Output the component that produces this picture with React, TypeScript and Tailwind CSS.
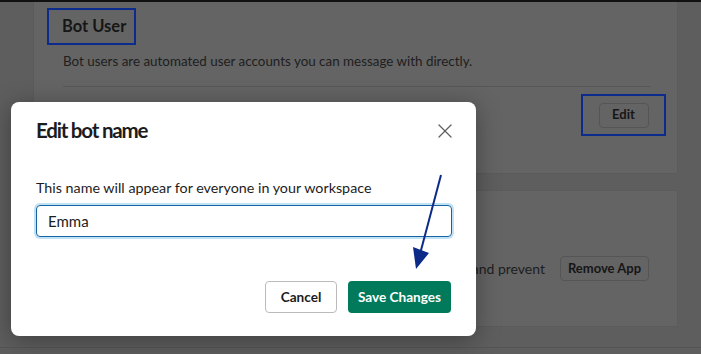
import { X } from "lucide-react";

// --- dimmed settings page behind the dialog ---

function BackgroundPage() {
  return (
    <div className="flex h-full flex-col pl-[33px] pr-[23px]">
      {/* Bot user card */}
      <section className="h-[172px] border-x border-b border-[#5b5b5b] bg-[#646464] pl-[13px] pr-[11px] pt-[6px]">
        <div className="inline-flex h-[37px] w-[89px] items-center border-2 border-[#0b2c8c] pl-[13px]">
          <h2 className="text-[16.5px] font-bold text-[#161616]">Bot User</h2>
        </div>
        <p className="mt-[6px] pl-[16px] text-[13.4px] text-[#1e1e1e]">
          Bot users are automated user accounts you can message with directly.
        </p>
        <div className="mt-[15px] ml-[16px] mr-[15px] border-t border-[#575757]" />
        <div className="mt-[7px] flex justify-end">
          <div className="flex h-[42px] w-[85px] items-center justify-center border-2 border-[#0b2c8c]">
            <button
              type="button"
              className="h-[25px] w-[50px] rounded-[4px] border border-[#555] text-[13px] font-bold text-[#161616]"
            >
              Edit
            </button>
          </div>
        </div>
      </section>

      {/* Remove app card */}
      <section className="mt-[16px] flex h-[137px] items-center border border-[#5b5b5b] bg-[#646464] px-[28px] pt-[20px]">
        <p className="flex-1 text-right text-[14px] text-[#1e1e1e]">
          Remove this app from your workspace and prevent
        </p>
        <button
          type="button"
          className="ml-[15px] h-[25px] w-[89px] rounded-[4px] border border-[#555] text-[13px] font-bold text-[#161616]"
        >
          Remove App
        </button>
      </section>

      <div className="mt-[20px] -ml-[33px] -mr-[23px] border-t border-[#555]" />
    </div>
  );
}

// --- dialog ---

function EditBotDialog() {
  return (
    <div className="absolute left-[11px] top-[100px] h-[234px] w-[465px] rounded-[8px] bg-white px-[25px] shadow-[0_4px_24px_rgba(0,0,0,0.35)]">
      <div className="flex items-center justify-between pt-[13px]">
        <h1 className="text-[20.5px] font-bold tracking-[-1.2px] text-[#1d1c1d]">
          Edit bot name
        </h1>
        <button type="button" className="-mr-[6px] mt-[2px] text-[#616061]">
          <X size={24} strokeWidth={1.3} />
        </button>
      </div>

      <label className="mt-[31px] block text-[14.3px] text-[#1d1c1d]">
        This name will appear for everyone in your workspace
      </label>
      <div className="mt-[7px] -mr-[1px] flex h-[32px] items-center rounded-[4px] border border-[#1264a3] px-[11px] text-[15px] text-[#1d1c1d] shadow-[0_0_0_2px_#c2e1f2]">
        Emma
      </div>

      <div className="mt-[44px] flex justify-end gap-[11px]">
        <button
          type="button"
          className="h-[32px] w-[72px] rounded-[4px] border border-[#bbbbbb] bg-white text-[13.6px] font-bold text-[#1d1c1d]"
        >
          Cancel
        </button>
        <button
          type="button"
          className="h-[32px] w-[103px] rounded-[4px] bg-[#007a5a] text-[13.6px] font-bold text-white"
        >
          Save Changes
        </button>
      </div>
    </div>
  );
}

function Arrow() {
  return (
    <svg
      className="pointer-events-none absolute left-0 top-0"
      width={701}
      height={354}
      viewBox="0 0 701 354"
    >
      <line x1={441} y1={173} x2={420} y2={252} stroke="#0c2a87" strokeWidth={2} />
      <polygon points="416,267 413,245 429,251" fill="#0c2a87" />
    </svg>
  );
}

export default function App() {
  return (
    <div
      className="relative h-[354px] w-[701px] overflow-hidden border-t-2 border-[#111] bg-[#5e5e5e]"
      style={{ fontFamily: "Lato, 'Liberation Sans', sans-serif" }}
    >
      <BackgroundPage />
      <EditBotDialog />
      <Arrow />
    </div>
  );
}
